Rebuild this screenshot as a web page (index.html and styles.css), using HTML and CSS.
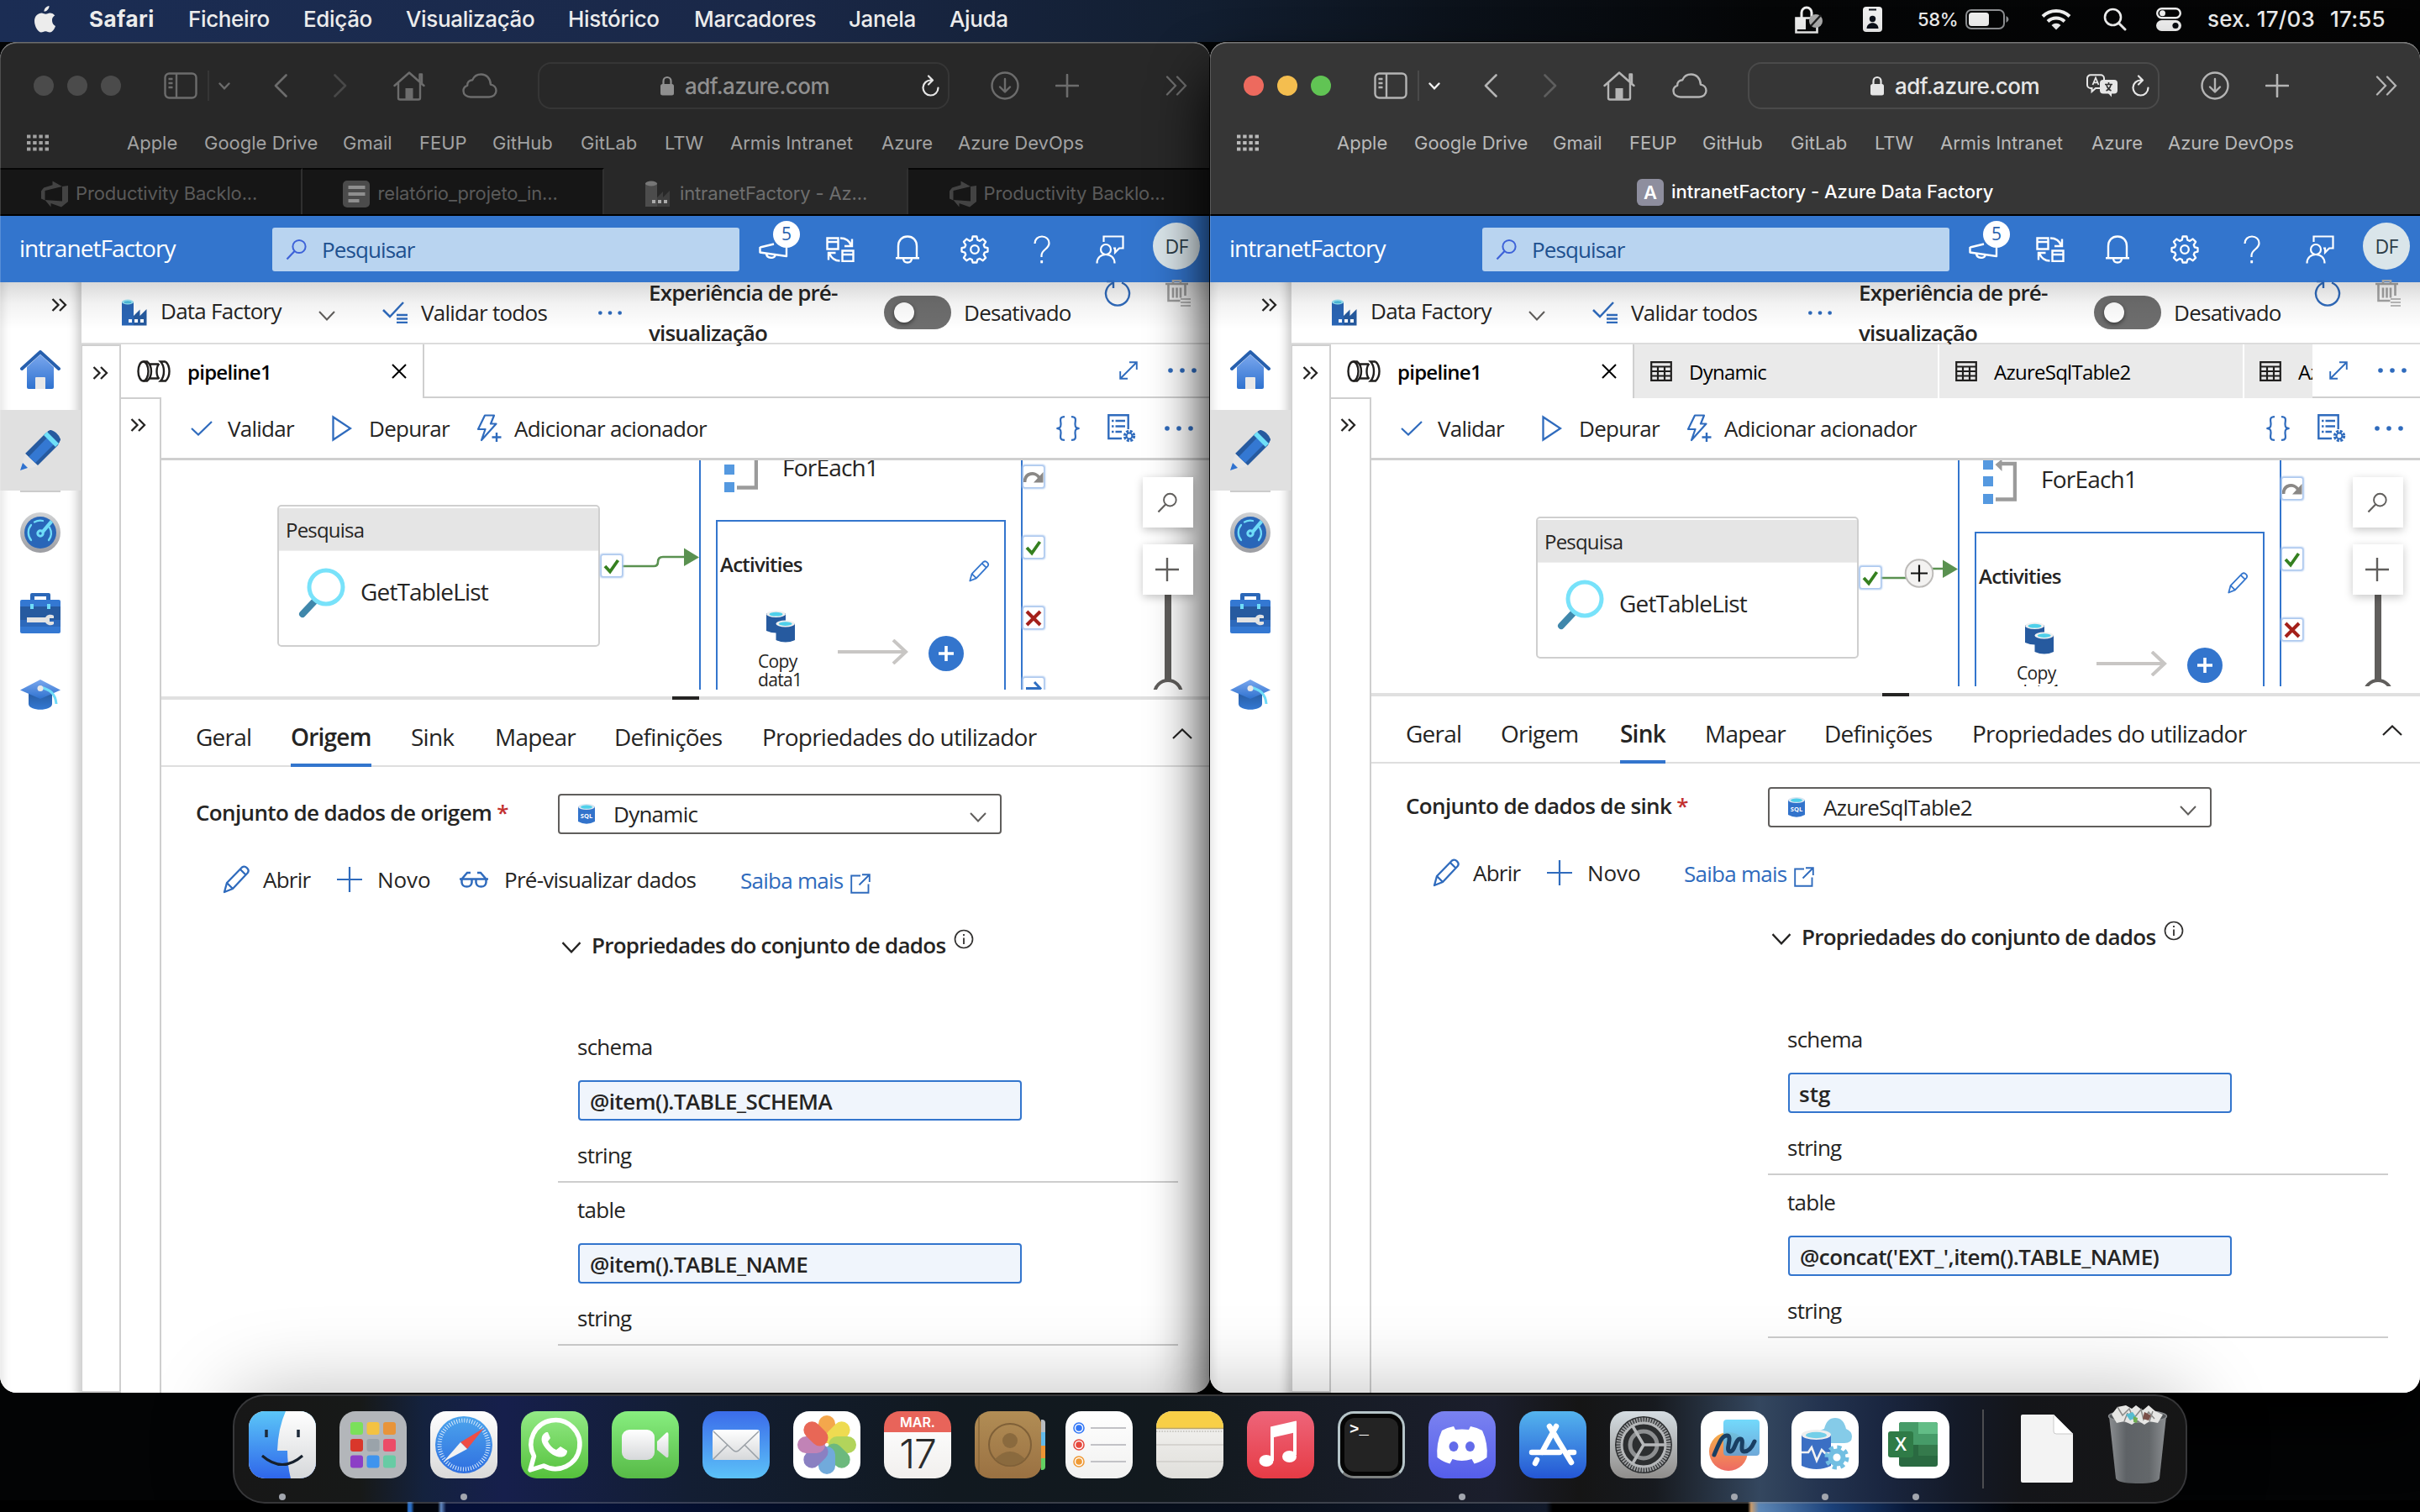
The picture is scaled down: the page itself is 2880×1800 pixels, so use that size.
FILE: index.html
```html
<!DOCTYPE html>
<html lang="pt">
<head>
<meta charset="utf-8">
<title>intranetFactory - Azure Data Factory</title>
<link rel="stylesheet" href="styles.css">
</head>
<body>
<svg class="defs" width="0" height="0" aria-hidden="true">
  <defs>
    <linearGradient id="gBlue" x1="0" y1="0" x2="0" y2="1"><stop offset="0" stop-color="#7aa7ee"/><stop offset="1" stop-color="#2f72cf"/></linearGradient>
    <linearGradient id="gDeep" x1="0" y1="0" x2="0" y2="1"><stop offset="0" stop-color="#265a9f"/><stop offset="1" stop-color="#3478d2"/></linearGradient>
    <linearGradient id="gGrey" x1="0" y1="0" x2="0" y2="1"><stop offset="0" stop-color="#d0d2d4"/><stop offset="1" stop-color="#9c9da2"/></linearGradient>
    <linearGradient id="gSafari" x1="0" y1="0" x2="0" y2="1"><stop offset="0" stop-color="#4ca4ec"/><stop offset="1" stop-color="#2f6fe0"/></linearGradient>
    <linearGradient id="gFinder" x1="0" y1="0" x2="0" y2="1"><stop offset="0" stop-color="#5bc6f8"/><stop offset="1" stop-color="#2f66ea"/></linearGradient>
    <linearGradient id="gWhite" x1="0" y1="0" x2="0" y2="1"><stop offset="0" stop-color="#fff"/><stop offset="1" stop-color="#d6d8da"/></linearGradient>
    <linearGradient id="gTrash" x1="0" y1="0" x2="1" y2="0"><stop offset="0" stop-color="#8b8e91"/><stop offset=".3" stop-color="#5e6266"/><stop offset=".7" stop-color="#63676a"/><stop offset="1" stop-color="#8b8e91"/></linearGradient>
    <linearGradient id="gOrange" x1="0" y1="0" x2="0" y2="1"><stop offset="0" stop-color="#f5b04a"/><stop offset="1" stop-color="#ee6a63"/></linearGradient>
    <linearGradient id="gSky" x1="0" y1="0" x2="0" y2="1"><stop offset="0" stop-color="#63d5fb"/><stop offset="1" stop-color="#5f9fd4"/></linearGradient>
  </defs>

  <symbol id="i-sidebar" viewBox="0 0 40 32"><g fill="none" stroke="currentColor" stroke-width="2.4"><rect x="1.5" y="1.5" width="37" height="29" rx="5"/><path d="M15 2v28M5.5 8h5M5.5 13h5M5.5 18h5"/></g></symbol>
  <symbol id="i-down" viewBox="0 0 14 9"><path d="M1.5 1.5 7 7.3l5.500-5.800" fill="none" stroke="currentColor" stroke-width="2.400" stroke-linecap="round"/></symbol>
  <symbol id="i-back" viewBox="0 0 16 28"><path d="M14.500 1.500 2 14l12.500 12.500" fill="none" stroke="currentColor" stroke-width="2.600" stroke-linecap="round" stroke-linejoin="round"/></symbol>
  <symbol id="i-fwd" viewBox="0 0 16 28"><path d="M1.500 1.500 14 14 1.500 26.500" fill="none" stroke="currentColor" stroke-width="2.600" stroke-linecap="round" stroke-linejoin="round"/></symbol>
  <symbol id="i-home" viewBox="0 0 38 36"><path d="M1.500 18 19 2.500 36.500 18M6 15v17.500a2 2 0 0 0 2 2h22a2 2 0 0 0 2-2V15M31.500 13V4.500h2.500V16" fill="none" stroke="currentColor" stroke-width="2.400" stroke-linejoin="round" stroke-linecap="round"/><path d="M14.500 21h9v13h-9z" fill="currentColor"/></symbol>
  <symbol id="i-cloud" viewBox="0 0 42 30"><path d="M10 28.500h22c5 0 8.500-3.200 8.500-7.400 0-4-2.800-7-6.600-7.500C33.700 6.500 29 1.500 22.500 1.500c-4.700 0-8.500 2.600-10.300 6.700-4 .3-6.400 3-6 6.700C3.300 15.800 1.500 18.300 1.500 21.200c0 4.200 3.600 7.300 8.500 7.300z" fill="none" stroke="currentColor" stroke-width="2.400" stroke-linejoin="round"/></symbol>
  <symbol id="i-lock" viewBox="0 0 16 24"><rect y="10" width="16" height="13.500" rx="2.500" fill="currentColor"/><path d="M3.500 11V6.500a4.500 4.500 0 0 1 9 0V11" fill="none" stroke="currentColor" stroke-width="2.200"/></symbol>
  <symbol id="i-reload" viewBox="0 0 22 27"><path d="M12 6.500a9 9 0 1 0 8.500 9M9 1.500l5 5-5 5" fill="none" stroke="currentColor" stroke-width="2.200" stroke-linecap="round" stroke-linejoin="round"/></symbol>
  <symbol id="i-translate" viewBox="0 0 38 28"><path d="M5 1.300h12a4 4 0 0 1 4 4V13a4 4 0 0 1-4 4h-6l-4.500 4V17H5a4 4 0 0 1-4-4V5.300a4 4 0 0 1 4-4z" fill="none" stroke="currentColor" stroke-width="2"/><path d="m7.500 13 3.500-8.500 3.500 8.500M8.800 10.300h4.400" fill="none" stroke="currentColor" stroke-width="1.800"/><rect x="16" y="7" width="21" height="16.500" rx="4" fill="currentColor"/><path d="M30 22v5.500L25 22z" fill="currentColor"/><path d="M22 12.500h9M26.500 10v2.500M23.500 20c3-1.500 5-4 5.500-7M24 13c.6 3 2.600 5.500 5.500 7" stroke="#333" stroke-width="1.600" fill="none"/></symbol>
  <symbol id="i-download" viewBox="0 0 34 34"><g fill="none" stroke="currentColor" stroke-width="2.400" stroke-linecap="round" stroke-linejoin="round"><circle cx="17" cy="17" r="15.500"/><path d="M17 9v15M11 18.500l6 6 6-6"/></g></symbol>
  <symbol id="i-plus" viewBox="0 0 28 28"><path d="M14 1v26M1 14h26" stroke="currentColor" stroke-width="2.600" stroke-linecap="round"/></symbol>
  <symbol id="i-more" viewBox="0 0 26 24"><path d="m2 1.500 10 10.500L2 22.500M14 1.500 24 12 14 22.500" fill="none" stroke="currentColor" stroke-width="2.300" stroke-linecap="round"/></symbol>
  <symbol id="i-grid" viewBox="0 0 26 20"><path d="M0 2.500h26M0 10h26M0 17.500h26" stroke="currentColor" stroke-width="4.200" stroke-dasharray="4.400 2.800"/></symbol>
  <symbol id="i-devops" viewBox="0 0 34 32"><path d="M33 6v19l-8 6.500-12.500-4.500v4.500L5.500 23 26 24.500V7zM26 7 14.500.5v4.800L4 8.500 1 12.500v9l4.500 2V12z" fill="currentColor"/></symbol>
  <symbol id="i-docs" viewBox="0 0 32 32"><rect width="32" height="32" rx="5" fill="#4b4b4b"/><path d="M6.500 8h20M6.500 16h20M6.500 24h13" stroke="#8f8f8f" stroke-width="4"/></symbol>
  <symbol id="i-factoryGrey" viewBox="0 0 32 32"><path d="M1 3h14v28H1z" fill="#4c4c4c"/><path d="M15 20l7-7v7l8-8v19H15z" fill="#3e3e3e"/><ellipse cx="8" cy="3.500" rx="7" ry="3" fill="#777"/><path d="M9 23h4v4H9zM16 23h4v4h-4zM23 23h4v4h-4z" fill="#aaa"/></symbol>

  <symbol id="i-search" viewBox="0 0 26 26"><circle cx="16" cy="9.500" r="7.600" fill="none" stroke="currentColor" stroke-width="2"/><path d="M10.500 15 1.500 24.500" stroke="currentColor" stroke-width="2.200"/></symbol>
  <symbol id="i-mega" viewBox="0 0 38 22"><path d="M1.500 8.500 18 4.500M1.500 8v6.500L33 19V9M9 16.500c1 5.500 9.500 5.500 10.500 1.500" fill="none" stroke="currentColor" stroke-width="2.400" stroke-linejoin="round"/></symbol>
  <symbol id="i-switch" viewBox="0 0 34 30"><g fill="none" stroke="currentColor" stroke-width="2.400"><path d="M1.500 1.500h13v13h-13zM1.500 6h13M19.500 16.500h13v12.500h-13zM19.500 21h13"/><path d="M17 1.500c6.500 0 11 3 13 9M31 2.500v8.500h-9M16.500 28.500c-6.500 0-10.500-4-12.500-9M3 27.500V19h8.500"/></g></symbol>
  <symbol id="i-bell" viewBox="0 0 30 34"><path d="M4 27V13C4 6 8.500 1.500 15 1.500S26 6 26 13v14M1 27.300h28M10 28c.5 6 9.500 6 10 0" fill="none" stroke="currentColor" stroke-width="2.400" stroke-linejoin="round"/></symbol>
  <symbol id="i-gear" viewBox="0 0 34 34"><circle cx="17" cy="17" r="4.800" fill="none" stroke="currentColor" stroke-width="2.300"/><path d="M14.600 1.500h4.800l.9 4.300 2.700 1.100 3.700-2.400 3.400 3.400-2.400 3.700 1.100 2.700 3.700.9v4.400l-3.700.9-1.100 2.700 2.400 3.700-3.400 3.400-3.700-2.400-2.700 1.100-.9 3.500h-4.800l-.9-3.500-2.700-1.100-3.700 2.400-3.400-3.400 2.400-3.700-1.100-2.700-3.700-.9v-4.400l3.700-.9 1.100-2.700-2.400-3.700 3.400-3.400 3.700 2.400 2.700-1.100z" fill="none" stroke="currentColor" stroke-width="2.300" stroke-linejoin="round"/></symbol>
  <symbol id="i-help" viewBox="0 0 22 34"><path d="M2.500 10c0-5 3.500-8.500 8.500-8.500s8.500 3.300 8.500 8c0 7-9 7.500-9 14.500v2" fill="none" stroke="currentColor" stroke-width="2.200"/><path d="M9.300 30h2.800v3.300H9.300z" fill="currentColor"/></symbol>
  <symbol id="i-feedback" viewBox="0 0 34 34"><g fill="none" stroke="currentColor" stroke-width="2.200"><circle cx="12" cy="17" r="6"/><path d="M1.500 33.500c0-6.500 4.500-10.500 10.500-10.500s10.500 4 10.500 10.500M9.500 8V1.500h23v14H28l-5 5v-5h-2"/></g></symbol>

  <symbol id="i-dbl" viewBox="0 0 19 16"><path d="m1.500 1 7 7-7 7M10 1l7 7-7 7" fill="none" stroke="currentColor" stroke-width="2.300"/></symbol>
  <symbol id="i-azHome" viewBox="0 0 48 46"><path d="M8 20 24 5l16 15v24a2 2 0 0 1-2 2H10a2 2 0 0 1-2-2z" fill="url(#gBlue)"/><path d="M2 22 24 2l22 20" fill="none" stroke="#265fae" stroke-width="4" stroke-linejoin="round" stroke-linecap="round"/><path d="M18 46V33a1 1 0 0 1 1-1h10a1 1 0 0 1 1 1v13z" fill="#e8e8e8"/></symbol>
  <symbol id="i-azPencil" viewBox="0 0 48 48"><path d="m6 28 24-24 6-4q3 0 7 3.500T48 11l-3 7-24 24z" fill="#265a9f"/><path d="m10 32 25-26 8 8-25 25z" fill="#3478d2"/><path d="m28 6 4-4 14 14-4 4z" fill="#6fe0f8"/><path d="m36 0 12 11-1.500 4L32.500 1.500z" fill="#265a9f"/><path d="M6 28 21 43 0 48z" fill="#e5e5e5"/><path d="m3 39 6 6-9 3z" fill="#2f72cf"/></symbol>
  <symbol id="i-azGauge" viewBox="0 0 48 48"><circle cx="24" cy="24" r="24" fill="url(#gGrey)"/><circle cx="24" cy="24" r="19" fill="#2966b8"/><g fill="none" stroke="#6fdcf8" stroke-width="2.300" stroke-linecap="round"><path d="M13 33a14 14 0 0 1 0-18M17 11.500a14 14 0 0 1 10-1.500M35 18a14 14 0 0 1-1 15"/><circle cx="24" cy="25" r="3.200" stroke-width="3"/></g><path d="m25 22 11-13 3 3-11 13z" fill="#6fdcf8"/></symbol>
  <symbol id="i-azTools" viewBox="0 0 48 48"><path d="M12 9V2q0-2 2-2h20q2 0 2 2v7h-5V4H17v5z" fill="#2a67b8"/><rect y="8" width="48" height="40" rx="2" fill="#3478d2"/><path d="M0 16h48v16H0z" fill="#265a9f"/><path d="M0 32h48v8H0z" fill="#2d69bb"/><path d="M12 13h4v6h-4zM32 13h4v6h-4z" fill="#6fdcf8"/><path d="M8 29h22a7 7 0 0 1 10-2v3h-5v4h5v3a7 7 0 0 1-10-2H8z" fill="#e2e2e2"/></symbol>
  <symbol id="i-azCap" viewBox="0 0 48 36"><path d="M10 14h28v15c0 9-28 9-28 0z" fill="url(#gDeep)"/><path d="M24 0 48 12.500 24 23 0 12.500z" fill="url(#gBlue)"/><path d="M24 9c12 3 18 8 19 20" fill="none" stroke="#6fdcf8" stroke-width="3"/><circle cx="24" cy="10.500" r="3.500" fill="#e8e8e8"/></symbol>
  <symbol id="i-factory" viewBox="0 0 32 32"><path d="M1 3h14v28.500H1z" fill="#2a66b6"/><path d="M15 20l7.500-7.500V20l8-8v19.500H15z" fill="#265a9f"/><ellipse cx="8" cy="3.500" rx="7" ry="3" fill="#9fe8f8"/><ellipse cx="8" cy="3.700" rx="4.500" ry="1.500" fill="#4bbfe0"/><path d="M9 24h4v4H9zM16 24h4v4h-4zM23 24h4v4h-4z" fill="#fff"/></symbol>
  <symbol id="i-chev" viewBox="0 0 20 12"><path d="m1 1 9 9.500L19 1" fill="none" stroke="currentColor" stroke-width="2"/></symbol>
  <symbol id="i-chevUp" viewBox="0 0 24 13"><path d="m1 12 11-10.500L23 12" fill="none" stroke="currentColor" stroke-width="2.200"/></symbol>
  <symbol id="i-validAll" viewBox="0 0 30 26"><path d="m1 10 8 8L25 1" fill="none" stroke="currentColor" stroke-width="2.500"/><path d="M17 16h13M17 20.500h13M17 25h13" stroke="currentColor" stroke-width="2.400"/></symbol>
  <symbol id="i-dots" viewBox="0 0 36 8"><circle cx="4" cy="4" r="2.800" fill="currentColor"/><circle cx="18" cy="4" r="2.800" fill="currentColor"/><circle cx="32" cy="4" r="2.800" fill="currentColor"/></symbol>
  <symbol id="i-refresh" viewBox="0 0 32 32"><path d="M11 3.500A14 14 0 1 0 21 3.500M11 10V2H3" fill="none" stroke="currentColor" stroke-width="2.400"/></symbol>
  <symbol id="i-trash" viewBox="0 0 30 32"><path d="M0 5h27M9 5V1h9v4M3.500 5v20h14M23.500 5v14M9 9.500v12M13.500 9.500v12M18 9.500v12" fill="none" stroke="currentColor" stroke-width="2.600"/><path d="M18 23h12M18 27h12M18 31h12" stroke="currentColor" stroke-width="1.500"/></symbol>
  <symbol id="i-pipeline" viewBox="0 0 40 26"><g fill="none" stroke="#201f1e" stroke-width="2.400"><ellipse cx="7.500" cy="13" rx="6" ry="11.500"/><path d="M7.500 1.500H12q5 4 5 11.500t-5 11.500H7.500M15.500 4.500H26M15.500 21.500H26M34 1.500h-6q4 4 4 11.500t-4 11.500h6q4.500-4 4.500-11.500T34 1.500M26.500 4q-3 3-3 9t3 9"/></g></symbol>
  <symbol id="i-close" viewBox="0 0 18 18"><path d="m1 1 16 16M17 1 1 17" stroke="currentColor" stroke-width="2"/></symbol>
  <symbol id="i-expand" viewBox="0 0 22 22"><path d="M1.500 20.500 20.500 1.500M12 1.200h8.800V10M10 20.800H1.200V12" fill="none" stroke="currentColor" stroke-width="1.900"/></symbol>
  <symbol id="i-table" viewBox="0 0 26 24"><path d="M1.200 1.200h23.600v21.600H1.200zM1 6.500h24M1 12h24M1 17.500h24M9 6.500V23M17 6.500V23" fill="none" stroke="#201f1e" stroke-width="2.200"/></symbol>
  <symbol id="i-check" viewBox="0 0 26 18"><path d="m1 9 8 7.500L25 1" fill="none" stroke="currentColor" stroke-width="2.200"/></symbol>
  <symbol id="i-play" viewBox="0 0 24 32"><path d="M1.500 2.500v27L22 16z" fill="none" stroke="currentColor" stroke-width="2.300"/></symbol>
  <symbol id="i-bolt" viewBox="0 0 30 34"><path d="M10 1.500h11l-4 10h6.500L6 31l4.500-13H2z" fill="none" stroke="currentColor" stroke-width="2.200" stroke-linejoin="round"/><path d="M24 22v11M18.500 27.500h11" stroke="currentColor" stroke-width="2.400"/></symbol>
  <symbol id="i-braces" viewBox="0 0 30 30"><path d="M11 1.200C4 1.200 6.500 6 6.500 10S5 14.500 1.500 15C5 15.500 6.500 16 6.500 20S4 28.800 11 28.800M19 1.200c7 0 4.500 4.800 4.500 8.800s1.500 4.500 5 5c-3.500.5-5 1-5 5s2.500 8.800-4.500 8.800" fill="none" stroke="currentColor" stroke-width="2.200"/></symbol>
  <symbol id="i-list" viewBox="0 0 34 34"><path d="M17 29H1.300V1.300h23.400V18" fill="none" stroke="currentColor" stroke-width="2.400"/><path d="M5 8h2.500M9.500 8H21M5 14.500h2.500M9.500 14.500H21M5 21h2.500M9.500 21H17" stroke="currentColor" stroke-width="2.400"/><circle cx="26" cy="26" r="5.600" fill="none" stroke="currentColor" stroke-width="3.200" stroke-dasharray="2.900 1.500"/><circle cx="26" cy="26" r="3.400" fill="none" stroke="currentColor" stroke-width="2"/></symbol>
  <symbol id="i-lens" viewBox="0 0 56 60"><path d="m5 55 16-17" stroke="#3f87ab" stroke-width="8" stroke-linecap="round"/><circle cx="33" cy="23" r="20" fill="#fff" stroke="#78e2fa" stroke-width="5"/></symbol>
  <symbol id="i-foreach" viewBox="0 0 40 54"><path d="M0 0h12v13H0zM0 21h12v12H0zM0 42h12v12H0z" fill="#5599e0"/><path d="M20 6h18v42.500H15" fill="none" stroke="#9b9b9b" stroke-width="4.500"/><path d="m14.500 7 8-6.500V15z" fill="#9b9b9b"/></symbol>
  <symbol id="i-copy" viewBox="0 0 34 38"><path d="M0 3h23v21q-11 5-23 0z" fill="#265a9f"/><ellipse cx="11.500" cy="4" rx="11.500" ry="4" fill="#f0f0f0"/><ellipse cx="11.500" cy="4.200" rx="8" ry="2.400" fill="#4fd0ea"/><path d="M11.500 15H34v20q-11 5-22.500 0z" fill="#265a9f"/><ellipse cx="22.700" cy="15.500" rx="11.300" ry="4" fill="#f0f0f0"/><ellipse cx="22.700" cy="15.600" rx="8" ry="2.300" fill="#4fd0ea"/></symbol>
  <symbol id="i-pen" viewBox="0 0 32 34"><path d="m2 32 3-11L23 2.500q3-2 6 .8t.6 6L12 28zM5 21l7 7M21 5l7 7" fill="none" stroke="currentColor" stroke-width="2.300" stroke-linejoin="round"/></symbol>
  <symbol id="i-glasses" viewBox="0 0 34 20"><g fill="none" stroke="currentColor" stroke-width="2.500"><path d="M2.500 9.500h12v4q-.5 5-6 5t-6-5zM19.500 9.500h12v4q-.5 5-6 5t-6-5zM0 9.500h34M2.500 9.500 9 2h4M31.500 9.500 25 2h-4"/></g></symbol>
  <symbol id="i-ext" viewBox="0 0 24 24"><path d="M12 2.500H1.200v20.300H21.500V12.500M10.500 13.500 22 2M14 1.200h8.800V10" fill="none" stroke="currentColor" stroke-width="1.900"/></symbol>
  <symbol id="i-sql" viewBox="0 0 20 24"><path d="M0 3h20v18q-10 5.500-20 0z" fill="#3273cb"/><ellipse cx="10" cy="3.500" rx="10" ry="3.500" fill="#d8e6f2"/><ellipse cx="10" cy="3.700" rx="7" ry="2.100" fill="#4fd0ea"/><text x="10" y="17" font-family="Open Sans, sans-serif" font-weight="700" font-size="7.500" letter-spacing="0" text-anchor="middle" fill="#fff">SQL</text></symbol>
  <symbol id="i-info" viewBox="0 0 24 24"><circle cx="12" cy="12" r="10.500" fill="none" stroke="#323130" stroke-width="1.700"/><path d="M12 10.500V18M12 6v2" stroke="#323130" stroke-width="1.800"/></symbol>
  <symbol id="i-redo" viewBox="0 0 24 25"><path d="M1.500 19C1.500 8 14 5.500 19 14" fill="none" stroke="#8a8886" stroke-width="3.800"/><path d="M23.500 7v12.500H12z" fill="#8a8886"/></symbol>
  <symbol id="i-ok" viewBox="0 0 24 25"><path d="m4 13 6 6.500L19.500 6" fill="none" stroke="#35801f" stroke-width="3.800"/></symbol>
  <symbol id="i-fail" viewBox="0 0 24 25"><path d="m4 5 16 16M20 5 4 21" stroke="#a4201a" stroke-width="4"/></symbol>
  <symbol id="i-next" viewBox="0 0 24 25"><path d="M3 12.500h16M13 5l7 7.500-7 7.500" fill="none" stroke="#2f6fc2" stroke-width="3"/></symbol>
</svg>

<header class="menubar">
  <svg width="27" height="32" viewBox="0 0 27 32"><path d="M18.500 0c.3 3.200-2.700 6.700-6 6.800C12.200 3.600 15.200.3 18.500 0zM22 17c0-3.500 2.500-5 3.300-5.500C23.500 8.900 21 8.500 19.800 8.400c-2.300-.2-4 1.300-5.300 1.300S11.300 8.400 9.500 8.400C5.500 8.500 1 11.700 1 18c0 6.500 4.500 13.500 8 13.500 1.900 0 2.900-1.300 5.200-1.300s3.200 1.300 5.100 1.300c3.300 0 6-5 6.700-7.500-.4-.2-4-1.800-4-7z" fill="#ececec"/></svg>
  <b>Safari</b><span>Ficheiro</span><span>Edição</span><span>Visualização</span><span>Histórico</span><span>Marcadores</span><span>Janela</span><span>Ajuda</span>
  <svg width="34" height="34" viewBox="0 0 34 34"><path d="M8 16V9a6 6 0 0 1 12 0v7" fill="none" stroke="#eee" stroke-width="3"/><path d="M1.500 15.500h25v17h-25z" fill="none" stroke="#eee" stroke-width="2.600"/><path d="M1 16h12v13H1z" fill="#eee"/><circle cx="25" cy="19" r="8" fill="#a9a9a9"/><path d="m19 25 12-13" stroke="#222" stroke-width="2.500"/></svg>
  <svg width="23" height="30" viewBox="0 0 23 30"><rect width="23" height="30" rx="4" fill="#eee"/><path d="M7 3.500h9" stroke="#0b1019" stroke-width="2"/><circle cx="11.500" cy="14.500" r="3.700" fill="#0b1019"/><path d="M4.500 26c0-9 14-9 14 0z" fill="#0b1019"/></svg>
  <span class="pct">58%</span>
  <svg width="52" height="24" viewBox="0 0 52 24"><rect x="1" y="1" width="45" height="22" rx="6" fill="none" stroke="#8d8f92" stroke-width="2"/><rect x="4" y="4" width="24" height="16" rx="3.500" fill="#eee"/><path d="M48.500 8v8q3-1.500 3-4t-3-4z" fill="#8d8f92"/></svg>
  <svg width="36" height="26" viewBox="0 0 36 26"><g fill="none" stroke="#eee" stroke-width="4"><path d="M2 9.500a23 23 0 0 1 32 0M8 15.500a14.500 14.500 0 0 1 20 0"/></g><path d="M18 25.500 12.500 20a8 8 0 0 1 11 0z" fill="#eee"/></svg>
  <svg width="28" height="28" viewBox="0 0 28 28"><circle cx="11.500" cy="11.500" r="9.500" fill="none" stroke="#eee" stroke-width="2.600"/><path d="m18.500 18.500 7.500 7.500" stroke="#eee" stroke-width="3" stroke-linecap="round"/></svg>
  <svg width="30" height="28" viewBox="0 0 30 28"><rect x="1.200" y="1.200" width="27.600" height="11" rx="5.500" fill="none" stroke="#eee" stroke-width="2.400"/><circle cx="7.500" cy="6.700" r="3.500" fill="#eee"/><rect y="15" width="30" height="13" rx="6.500" fill="#eee"/><circle cx="23" cy="21.500" r="3.600" fill="#070a0f"/></svg>
  <span class="clock">sex. 17/03</span><span class="clock">17:55</span>
</header>

<section class="window inactive">
  <div class="nav">
    <div class="lights"><i></i><i></i><i></i></div>
    <svg width="40" height="32"><use href="#i-sidebar"/></svg><i class="sep"></i>
    <svg width="14" height="9"><use href="#i-down"/></svg>
    <svg width="16" height="28"><use href="#i-back"/></svg>
    <svg class="dim" width="16" height="28"><use href="#i-fwd"/></svg>
    <svg width="38" height="36"><use href="#i-home"/></svg>
    <svg width="42" height="30"><use href="#i-cloud"/></svg>
    <div class="address"><svg width="16" height="24"><use href="#i-lock"/></svg><span>adf.azure.com</span><i></i><svg class="bright" width="22" height="27"><use href="#i-reload"/></svg></div>
    <svg width="34" height="34"><use href="#i-download"/></svg>
    <svg width="28" height="28"><use href="#i-plus"/></svg>
    <svg width="26" height="24"><use href="#i-more"/></svg>
  </div>
  <div class="bookmarks"><svg width="26" height="20"><use href="#i-grid"/></svg><span>Apple</span><span>Google Drive</span><span>Gmail</span><span>FEUP</span><span>GitHub</span><span>GitLab</span><span>LTW</span><span>Armis Intranet</span><span>Azure</span><span>Azure DevOps</span></div>
  <div class="tabbar">
    <div class="btab"><svg width="34" height="32"><use href="#i-devops"/></svg><span>Productivity Backlo...</span></div>
    <div class="btab"><svg width="32" height="32"><use href="#i-docs"/></svg><span>relatório_projeto_in...</span></div>
    <div class="btab current"><svg width="32" height="32"><use href="#i-factoryGrey"/></svg><span>intranetFactory - Az...</span></div>
    <div class="btab"><svg width="34" height="32"><use href="#i-devops"/></svg><span>Productivity Backlo...</span></div>
  </div>
  <div class="azhead">
    <span class="brand">intranetFactory</span>
    <div class="search"><svg width="26" height="26"><use href="#i-search"/></svg><span>Pesquisar</span></div>
    <div class="mega"><svg width="38" height="22"><use href="#i-mega"/></svg><em>5</em></div>
    <svg width="34" height="30"><use href="#i-switch"/></svg>
    <svg width="30" height="34"><use href="#i-bell"/></svg>
    <svg width="34" height="34"><use href="#i-gear"/></svg>
    <svg width="22" height="34"><use href="#i-help"/></svg>
    <svg width="34" height="34"><use href="#i-feedback"/></svg>
    <span class="avatar">DF</span>
  </div>
  <div class="page">
    <nav class="rail">
      <svg class="dbl" width="19" height="16"><use href="#i-dbl"/></svg>
      <a><svg width="48" height="46"><use href="#i-azHome"/></svg></a>
      <a class="on"><svg width="48" height="48"><use href="#i-azPencil"/></svg></a>
      <a><svg width="48" height="48"><use href="#i-azGauge"/></svg></a>
      <a><svg width="48" height="48"><use href="#i-azTools"/></svg></a>
      <a><svg width="48" height="36"><use href="#i-azCap"/></svg></a>
    </nav>
    <main class="main">
      <div class="bar1">
        <svg width="32" height="32"><use href="#i-factory"/></svg><span class="up">Data Factory</span>
        <svg class="grey low" width="20" height="12"><use href="#i-chev"/></svg>
        <svg width="30" height="26"><use href="#i-validAll"/></svg><span>Validar todos</span>
        <svg class="small" width="30" height="7"><use href="#i-dots"/></svg>
        <b>Experiência de pré-<br>visualização</b>
        <i class="toggle"></i><span>Desativado</span>
        <svg class="top" width="32" height="32"><use href="#i-refresh"/></svg>
        <svg class="top disabled" width="30" height="32"><use href="#i-trash"/></svg>
      </div>
      <div class="split">
        <aside class="fold"><svg width="19" height="16"><use href="#i-dbl"/></svg></aside>
        <div class="stack">
          <div class="tabs">
            <div class="tab open"><svg width="40" height="26"><use href="#i-pipeline"/></svg><b>pipeline1</b><svg width="18" height="18"><use href="#i-close"/></svg></div>
            <div class="tabacts wide"><svg width="22" height="22"><use href="#i-expand"/></svg><svg width="36" height="8"><use href="#i-dots"/></svg></div>
          </div>
          <div class="split">
            <aside class="fold second"><svg width="19" height="16"><use href="#i-dbl"/></svg></aside>
            <div class="stack">
              <div class="bar2">
                <svg width="26" height="18"><use href="#i-check"/></svg><span>Validar</span>
                <svg width="24" height="32"><use href="#i-play"/></svg><span>Depurar</span>
                <svg width="30" height="34"><use href="#i-bolt"/></svg><span>Adicionar acionador</span>
                <svg width="30" height="30"><use href="#i-braces"/></svg>
                <svg width="34" height="34"><use href="#i-list"/></svg>
                <svg width="36" height="8"><use href="#i-dots"/></svg>
              </div>
              <div class="canvas">
                <div class="graph">
                  <svg class="wires" width="1248" height="273" viewBox="0 0 1248 273"><path d="M546 126h40q5 0 5-5v-0q0-6 6-6h26" fill="none" stroke="#5a9150" stroke-width="2.600"/><path d="M622 104.500v21.500l18-10.500z" fill="#5a9150"/></svg>
                  <div class="node"><div class="kind">Pesquisa</div><div class="name"><svg width="56" height="60"><use href="#i-lens"/></svg><span>GetTableList</span></div></div>
                  <svg class="port out" width="24" height="25"><use href="#i-ok"/></svg>
                  <div class="foreach">
                    <div class="fhead"><svg width="40" height="54"><use href="#i-foreach"/></svg><span>ForEach1</span></div>
                    <div class="inner">
                      <div class="ihead"><b>Activities</b><svg width="26" height="26"><use href="#i-pen"/></svg></div>
                      <div class="irow"><div class="act"><svg width="34" height="38"><use href="#i-copy"/></svg><span>Copy data1</span></div>
                        <svg class="arrow" width="84" height="30" viewBox="0 0 84 30"><path d="M0 15h80M66 1l15 14-15 14" fill="none" stroke="#c8c6c4" stroke-width="4"/></svg><i class="add"><svg width="18" height="18" viewBox="0 0 18 18"><path d="M9 0v18M0 9h18" stroke="#fff" stroke-width="3.600"/></svg></i></div>
                    </div>
                  </div>
                  <div class="ports"><svg class="port" width="24" height="25"><use href="#i-redo"/></svg><svg class="port" width="24" height="25"><use href="#i-ok"/></svg><svg class="port" width="24" height="25"><use href="#i-fail"/></svg><svg class="port" width="24" height="25"><use href="#i-next"/></svg></div>
                </div>
                <div class="zoom"><i><svg width="25" height="25"><use href="#i-search"/></svg></i><i><svg width="28" height="28" viewBox="0 0 28 28"><path d="M14 0v28M0 14h28" stroke="#605e5c" stroke-width="2.400"/></svg></i><div class="track"></div><div class="knob"></div></div>
              </div>
              <div class="splitter"><i></i></div>
              <div class="ptabs"><span>Geral</span><span class="sel">Origem</span><span>Sink</span><span>Mapear</span><span>Definições</span><span>Propriedades do utilizador</span><svg width="24" height="13"><use href="#i-chevUp"/></svg></div>
              <div class="form">
                <div class="frow dataset"><b>Conjunto de dados de origem <em>*</em></b><div class="select"><svg width="20" height="24"><use href="#i-sql"/></svg><span>Dynamic</span><svg width="20" height="12"><use href="#i-chev"/></svg></div></div>
                <div class="frow cmds"><svg width="32" height="34"><use href="#i-pen"/></svg><span>Abrir</span><svg width="30" height="30" viewBox="0 0 30 30"><path d="M15 0v30M0 15h30" stroke="currentColor" stroke-width="2.200"/></svg><span class="nv">Novo</span><svg width="34" height="20"><use href="#i-glasses"/></svg><span>Pré-visualizar dados</span><a>Saiba mais</a><svg class="ext" width="24" height="24"><use href="#i-ext"/></svg></div>
                <div class="frow sect"><svg width="26" height="14"><use href="#i-chev"/></svg><b>Propriedades do conjunto de dados</b><svg class="info" width="24" height="24"><use href="#i-info"/></svg></div>
                <div class="fields">
                  <div class="field"><label>schema</label><div class="input">@item().TABLE_SCHEMA</div><span>string</span></div>
                  <div class="field"><label>table</label><div class="input">@item().TABLE_NAME</div><span>string</span></div>
                </div>
              </div>
            </div>
          </div>
        </div>
      </div>
    </main>
  </div>
</section>

<section class="window active">
  <div class="nav">
    <div class="lights"><i></i><i></i><i></i></div>
    <svg width="40" height="32"><use href="#i-sidebar"/></svg><i class="sep"></i>
    <svg class="bright" width="14" height="9"><use href="#i-down"/></svg>
    <svg width="16" height="28"><use href="#i-back"/></svg>
    <svg class="dim" width="16" height="28"><use href="#i-fwd"/></svg>
    <svg width="38" height="36"><use href="#i-home"/></svg>
    <svg width="42" height="30"><use href="#i-cloud"/></svg>
    <div class="address"><svg width="16" height="24"><use href="#i-lock"/></svg><span>adf.azure.com</span><svg width="38" height="28"><use href="#i-translate"/></svg><svg width="22" height="27"><use href="#i-reload"/></svg></div>
    <svg width="34" height="34"><use href="#i-download"/></svg>
    <svg width="28" height="28"><use href="#i-plus"/></svg>
    <svg width="26" height="24"><use href="#i-more"/></svg>
  </div>
  <div class="bookmarks"><svg width="26" height="20"><use href="#i-grid"/></svg><span>Apple</span><span>Google Drive</span><span>Gmail</span><span>FEUP</span><span>GitHub</span><span>GitLab</span><span>LTW</span><span>Armis Intranet</span><span>Azure</span><span>Azure DevOps</span></div>
  <div class="tabbar single"><i class="fav">A</i><span>intranetFactory - Azure Data Factory</span></div>
  <div class="azhead">
    <span class="brand">intranetFactory</span>
    <div class="search"><svg width="26" height="26"><use href="#i-search"/></svg><span>Pesquisar</span></div>
    <div class="mega"><svg width="38" height="22"><use href="#i-mega"/></svg><em>5</em></div>
    <svg width="34" height="30"><use href="#i-switch"/></svg>
    <svg width="30" height="34"><use href="#i-bell"/></svg>
    <svg width="34" height="34"><use href="#i-gear"/></svg>
    <svg width="22" height="34"><use href="#i-help"/></svg>
    <svg width="34" height="34"><use href="#i-feedback"/></svg>
    <span class="avatar">DF</span>
  </div>
  <div class="page">
    <nav class="rail">
      <svg class="dbl" width="19" height="16"><use href="#i-dbl"/></svg>
      <a><svg width="48" height="46"><use href="#i-azHome"/></svg></a>
      <a class="on"><svg width="48" height="48"><use href="#i-azPencil"/></svg></a>
      <a><svg width="48" height="48"><use href="#i-azGauge"/></svg></a>
      <a><svg width="48" height="48"><use href="#i-azTools"/></svg></a>
      <a><svg width="48" height="36"><use href="#i-azCap"/></svg></a>
    </nav>
    <main class="main">
      <div class="bar1">
        <svg width="32" height="32"><use href="#i-factory"/></svg><span class="up">Data Factory</span>
        <svg class="grey low" width="20" height="12"><use href="#i-chev"/></svg>
        <svg width="30" height="26"><use href="#i-validAll"/></svg><span>Validar todos</span>
        <svg class="small" width="30" height="7"><use href="#i-dots"/></svg>
        <b>Experiência de pré-<br>visualização</b>
        <i class="toggle"></i><span>Desativado</span>
        <svg class="top" width="32" height="32"><use href="#i-refresh"/></svg>
        <svg class="top disabled" width="30" height="32"><use href="#i-trash"/></svg>
      </div>
      <div class="split">
        <aside class="fold"><svg width="19" height="16"><use href="#i-dbl"/></svg></aside>
        <div class="stack">
          <div class="tabs">
            <div class="tab open"><svg width="40" height="26"><use href="#i-pipeline"/></svg><b>pipeline1</b><svg width="18" height="18"><use href="#i-close"/></svg></div>
            <div class="tab"><svg width="26" height="24"><use href="#i-table"/></svg><span>Dynamic</span></div>
            <div class="tab"><svg width="26" height="24"><use href="#i-table"/></svg><span>AzureSqlTable2</span></div>
            <div class="tab cut"><svg width="26" height="24"><use href="#i-table"/></svg><span>Az</span></div>
            <div class="tabacts"><svg width="22" height="22"><use href="#i-expand"/></svg><svg width="36" height="8"><use href="#i-dots"/></svg></div>
          </div>
          <div class="split">
            <aside class="fold second"><svg width="19" height="16"><use href="#i-dbl"/></svg></aside>
            <div class="stack">
              <div class="bar2">
                <svg width="26" height="18"><use href="#i-check"/></svg><span>Validar</span>
                <svg width="24" height="32"><use href="#i-play"/></svg><span>Depurar</span>
                <svg width="30" height="34"><use href="#i-bolt"/></svg><span>Adicionar acionador</span>
                <svg width="30" height="30"><use href="#i-braces"/></svg>
                <svg width="34" height="34"><use href="#i-list"/></svg>
                <svg width="36" height="8"><use href="#i-dots"/></svg>
              </div>
              <div class="canvas short">
                <div class="graph shifted">
                  <svg class="wires" width="1248" height="273" viewBox="0 0 1248 273"><path d="M546 126h40q5 0 5-5v-0q0-6 6-6h26" fill="none" stroke="#5a9150" stroke-width="2.600"/><path d="M622 104.500v21.500l18-10.500z" fill="#5a9150"/><circle cx="594" cy="120.500" r="16.300" fill="#f3f2f1" stroke="#bdbbb9" stroke-width="2"/><path d="M594 110.500v20M584 120.500h20" stroke="#111" stroke-width="2.200"/></svg>
                  <div class="node"><div class="kind">Pesquisa</div><div class="name"><svg width="56" height="60"><use href="#i-lens"/></svg><span>GetTableList</span></div></div>
                  <svg class="port out" width="24" height="25"><use href="#i-ok"/></svg>
                  <div class="foreach">
                    <div class="fhead"><svg width="40" height="54"><use href="#i-foreach"/></svg><span>ForEach1</span></div>
                    <div class="inner">
                      <div class="ihead"><b>Activities</b><svg width="26" height="26"><use href="#i-pen"/></svg></div>
                      <div class="irow"><div class="act"><svg width="34" height="38"><use href="#i-copy"/></svg><span>Copy data1</span></div>
                        <svg class="arrow" width="84" height="30" viewBox="0 0 84 30"><path d="M0 15h80M66 1l15 14-15 14" fill="none" stroke="#c8c6c4" stroke-width="4"/></svg><i class="add"><svg width="18" height="18" viewBox="0 0 18 18"><path d="M9 0v18M0 9h18" stroke="#fff" stroke-width="3.600"/></svg></i></div>
                    </div>
                  </div>
                  <div class="ports"><svg class="port" width="24" height="25"><use href="#i-redo"/></svg><svg class="port" width="24" height="25"><use href="#i-ok"/></svg><svg class="port" width="24" height="25"><use href="#i-fail"/></svg></div>
                </div>
                <div class="zoom"><i><svg width="25" height="25"><use href="#i-search"/></svg></i><i><svg width="28" height="28" viewBox="0 0 28 28"><path d="M14 0v28M0 14h28" stroke="#605e5c" stroke-width="2.400"/></svg></i><div class="track"></div><div class="knob"></div></div>
              </div>
              <div class="splitter"><i></i></div>
              <div class="ptabs"><span>Geral</span><span>Origem</span><span class="sel sink">Sink</span><span>Mapear</span><span>Definições</span><span>Propriedades do utilizador</span><svg width="24" height="13"><use href="#i-chevUp"/></svg></div>
              <div class="form tight">
                <div class="frow dataset"><b>Conjunto de dados de sink <em>*</em></b><div class="select"><svg width="20" height="24"><use href="#i-sql"/></svg><span>AzureSqlTable2</span><svg width="20" height="12"><use href="#i-chev"/></svg></div></div>
                <div class="frow cmds sinkcmds"><svg width="32" height="34"><use href="#i-pen"/></svg><span>Abrir</span><svg width="30" height="30" viewBox="0 0 30 30"><path d="M15 0v30M0 15h30" stroke="currentColor" stroke-width="2.200"/></svg><span class="nv">Novo</span><a>Saiba mais</a><svg class="ext" width="24" height="24"><use href="#i-ext"/></svg></div>
                <div class="frow sect"><svg width="26" height="14"><use href="#i-chev"/></svg><b>Propriedades do conjunto de dados</b><svg class="info" width="24" height="24"><use href="#i-info"/></svg></div>
                <div class="fields">
                  <div class="field"><label>schema</label><div class="input plain">stg</div><span>string</span></div>
                  <div class="field"><label>table</label><div class="input">@concat('EXT_',item().TABLE_NAME)</div><span>string</span></div>
                </div>
              </div>
            </div>
          </div>
        </div>
      </div>
    </main>
  </div>
</section>

<footer class="dock">
  <div class="app run finder"><svg viewBox="0 0 80 80"><path d="M0 0h80v80H0z" fill="url(#gFinder)"/><path d="M44 0h36v80H50q-4-16-4-33H34Q35 20 44 0z" fill="url(#gWhite)"/><path d="M21 22v9M59 22v9" stroke="#1d2a3a" stroke-width="3.500"/><path d="M16 53q24 21 48 0" fill="none" stroke="#16202c" stroke-width="3"/></svg></div>
  <div class="app launch"><svg viewBox="0 0 80 80"><g><rect x="13" y="13" width="15" height="15" rx="3" fill="#7be05a"/><rect x="32.500" y="13" width="15" height="15" rx="3" fill="#f3c242"/><rect x="52" y="13" width="15" height="15" rx="3" fill="#e8943a"/><rect x="13" y="33" width="15" height="15" rx="3" fill="#d9372b"/><rect x="32.500" y="33" width="15" height="15" rx="3" fill="#9aa3aa"/><rect x="52" y="33" width="15" height="15" rx="3" fill="#ec4c68"/><rect x="13" y="52.500" width="15" height="15" rx="3" fill="#8c3fc6"/><rect x="32.500" y="52.500" width="15" height="15" rx="3" fill="#3f94ee"/><rect x="52" y="52.500" width="15" height="15" rx="3" fill="#67cba4"/></g></svg></div>
  <div class="app run safari"><svg viewBox="0 0 80 80"><circle cx="40" cy="40" r="34" fill="url(#gSafari)"/><circle cx="40" cy="40" r="29" fill="none" stroke="#dcecfb" stroke-width="5" stroke-dasharray="1 2.040"/><path d="M64 20 44 45l-8-8z" fill="#ee4d45"/><path d="M16 60 36 37l8 8z" fill="#f2f2f2"/></svg></div>
  <div class="app whats"><svg viewBox="0 0 80 80"><path d="M11 70l4.500-16.500A29 29 0 1 1 27 65z" fill="none" stroke="#fff" stroke-width="5.500" stroke-linejoin="round"/><path d="M30 25c-5 2-7 8-4 14s10 13 17 15 12-1 12-7l-8-5-5 4c-5-2-8-6-10-10l3-4-3-7z" fill="#fff"/></svg></div>
  <div class="app face"><svg viewBox="0 0 80 80"><rect x="12" y="22" width="39" height="36" rx="9" fill="url(#gWhite)"/><path d="M54 36 65 25.500q2.500-1 2.500 2V53q0 3-2.500 2L54 46z" fill="url(#gWhite)"/></svg></div>
  <div class="app mail"><svg viewBox="0 0 80 80"><rect x="12" y="22" width="56" height="36" rx="3" fill="url(#gWhite)"/><path d="m13 24 23 22q4 4 8 0l23-22M13 57l17-17M67 57 50 40" fill="none" stroke="#9aa0a6" stroke-width="1.600"/></svg></div>
  <div class="app photos"><svg viewBox="0 0 80 80"><g opacity=".88"><rect x="30" y="5" width="20" height="33" rx="10" fill="#f39b34"/><rect x="30" y="5" width="20" height="33" rx="10" fill="#ecd73a" transform="rotate(45 40 40)"/><rect x="30" y="5" width="20" height="33" rx="10" fill="#a8cf45" transform="rotate(90 40 40)"/><rect x="30" y="5" width="20" height="33" rx="10" fill="#58b06b" transform="rotate(135 40 40)"/><rect x="30" y="5" width="20" height="33" rx="10" fill="#5e9fd6" transform="rotate(180 40 40)"/><rect x="30" y="5" width="20" height="33" rx="10" fill="#7a6fba" transform="rotate(225 40 40)"/><rect x="30" y="5" width="20" height="33" rx="10" fill="#b972ac" transform="rotate(270 40 40)"/><rect x="30" y="5" width="20" height="33" rx="10" fill="#e5533f" transform="rotate(315 40 40)"/></g></svg></div>
  <div class="app cal"><em>MAR.</em><strong>17</strong></div>
  <div class="app contacts"><svg viewBox="0 0 80 80"><circle cx="42" cy="40" r="25" fill="none" stroke="#7f6038" stroke-width="2"/><circle cx="42" cy="35" r="9" fill="#8a6a3e"/><path d="M24 57q18-18 36 0-18 15-36 0z" fill="#8a6a3e"/><path d="M5 0v80" stroke="#8a683a" stroke-width="1.500"/></svg></div>
  <div class="app remind"><svg viewBox="0 0 80 80"><g stroke="#c2c2c6" stroke-width="2"><path d="M30 20h42M30 40h42M30 60h42"/></g><g stroke-width="1.600"><circle cx="16" cy="20" r="6" fill="#fff" stroke="#3478f6"/><circle cx="16" cy="20" r="3.800" fill="#3478f6"/><circle cx="16" cy="40" r="6" fill="#fff" stroke="#e5483d"/><circle cx="16" cy="40" r="3.800" fill="#e5483d"/><circle cx="16" cy="60" r="6" fill="#fff" stroke="#ef9a36"/><circle cx="16" cy="60" r="3.800" fill="#ef9a36"/></g></svg></div>
  <div class="app notes"><svg viewBox="0 0 80 80"><path d="M0 0h80v20H0z" fill="#f8cf47"/><path d="M0 20.500h80" stroke="#b9a56a" stroke-width="1.500"/><path d="M0 24h80" stroke="#c9c7c2" stroke-width="2" stroke-dasharray="1.500 1.700"/><path d="M0 40h80M0 60h80" stroke="#cfcdc9" stroke-width="1.600"/></svg></div>
  <div class="app music"><svg viewBox="0 0 80 80"><path d="M30 59V22l27-7.500V52" fill="none" stroke="#fff" stroke-width="4"/><path d="M28 18.500 58.500 11.500V25L28 32z" fill="#fff"/><ellipse cx="23" cy="59" rx="8.500" ry="7" fill="#fff"/><ellipse cx="50.500" cy="54" rx="8.500" ry="7" fill="#fff"/></svg></div>
  <div class="app term"><span>&gt;_</span></div>
  <div class="app run discord"><svg viewBox="0 0 80 80"><path d="M30 18q-8 1.300-14 5Q9 38 10.500 55q7 5.500 15 7.500l3-5.500q11 4 23 0l3 5.500q8-2 15-7.500Q71 38 64 23q-6-3.700-14-5l-2 4q-8-1.200-16 0z" fill="#fff"/><ellipse cx="30" cy="42" rx="5.500" ry="6" fill="#626bea"/><ellipse cx="49.500" cy="42" rx="5.500" ry="6" fill="#626bea"/></svg></div>
  <div class="app store"><svg viewBox="0 0 80 80"><path d="M44 18 27 49M36 18l8 13M45 33l17 28M15 49h33M60 49h5M21 58l-2 4" stroke="#fff" stroke-width="6.500" stroke-linecap="round"/></svg></div>
  <div class="app prefs"><svg viewBox="0 0 80 80"><circle cx="40" cy="40" r="34" fill="#2c2e30"/><circle cx="40" cy="40" r="29.500" fill="none" stroke="#9a9c9e" stroke-width="6" stroke-dasharray="2 1.100"/><circle cx="40" cy="40" r="26" fill="none" stroke="#b5b7b9" stroke-width="3"/><circle cx="40" cy="40" r="16" fill="none" stroke="#8d8f91" stroke-width="5"/><path d="M40 40h27M40 40 26.500 17M40 40 26.500 63" stroke="#b5b7b9" stroke-width="3.500"/></svg></div>
  <div class="app run free"><svg viewBox="0 0 80 80"><circle cx="33" cy="48" r="23" fill="url(#gOrange)"/><rect x="27" y="10" width="43" height="43" rx="4" fill="url(#gSky)" opacity=".9"/><path d="M16 52c6-14 9-23 15-23 8 0-3 19 4 19 6 0 6-15 12-15s-2 15 5 15c5 0 9-5 12-12" fill="none" stroke="#193f63" stroke-width="5" stroke-linecap="round"/></svg></div>
  <div class="app run ads"><svg viewBox="0 0 80 80"><path d="M34 38q-8-14 5-17 3-13 13-13t13 13q7 3 7 9 0 8-9 8z" fill="#85cbe8"/><path d="M12 28h35v37q-17 8-35 0z" fill="#3b6fc4"/><ellipse cx="29.500" cy="28" rx="17.500" ry="6" fill="#eee"/><ellipse cx="29.500" cy="28.500" rx="12.500" ry="3.700" fill="#74cfe8"/><path d="M12 49h8l4-6 6 16 6-13 4 4h6" fill="none" stroke="#f2f2f2" stroke-width="2.600"/><circle cx="54" cy="55" r="12" fill="none" stroke="#72bfe2" stroke-width="5" stroke-dasharray="5 4.420"/><circle cx="54" cy="55" r="7.500" fill="#fff" stroke="#72bfe2" stroke-width="6"/></svg></div>
  <div class="app run excel"><svg viewBox="0 0 80 80"><rect x="20" y="13" width="46" height="53" rx="3" fill="#2a6a41"/><path d="M23 13h20v27H20V16q0-3 3-3z" fill="#469b68"/><path d="M43 13h20q3 0 3 3v11H43z" fill="#62bd86"/><path d="M43 27h23v13H43z" fill="#469b68"/><path d="M43 40h23v13H43z" fill="#357a4c"/><rect x="7" y="24" width="30" height="31" rx="3" fill="#2f7b47"/><text x="22" y="47" text-anchor="middle" font-family="Open Sans, sans-serif" font-weight="600" font-size="22" fill="#fff">X</text></svg></div>
  <i class="rule"></i>
  <svg class="doc" width="62" height="81" viewBox="0 0 62 81"><path d="M2 0h37l23 23v56q0 2-2 2H2q-2 0-2-2V2q0-2 2-2z" fill="#f3f3f3"/><path d="m39 0 23 23H42q-3 0-3-3z" fill="#fff" stroke="#c9c9c9"/></svg>
  <svg class="trash" width="72" height="94" viewBox="0 0 72 94"><path d="M2 14h68l-8 74q-2 6-26 6t-26-6z" fill="url(#gTrash)"/><ellipse cx="36" cy="14" rx="34.500" ry="7" fill="#54575a" stroke="#8b8e91" stroke-width="1.500"/><path d="m5 12 7-9 10-2 7 4 5-4 8 6 7-6 8 7 9 4-6 10-10-2-6 4-8-5-7 5-9-4-9 2z" fill="#e6e6e4"/><path d="m12 3 6 10 8-8 5 12 9-11 3 12 6-9 7 8M20 20l4-10M50 20l4-12" fill="none" stroke="#8a8a88" stroke-width="1.500"/><path d="m22 12 8-3 4 6-7 4z" fill="#57bcd0"/><path d="m44 9 8 4-3 6-7-2z" fill="#7a4f48"/><path d="m31 14 5 2-1 6-4-1z" fill="#6fae52"/></svg>
</footer>
</body>
</html>
```
FILE: styles.css
```css
* { box-sizing: border-box; margin: 0; }
html, body { width: 2880px; height: 1800px; overflow: hidden; }
body {
  background:
    linear-gradient(90deg, #000 484px, #2f7de0 486px, #2f7de0 489px, #03060f 493px, #03060f 521px, #6f9de0 525px, #06123f 531px, #061440 700px, #040d1e 1100px, #0a1220 1500px, #141d30 1840px, #000 1848px, #000 2080px, #e8b27a 2084px, #6a9ad0 2093px, #1f4a8a 2180px, #0a1c40 2270px, #020408 2400px, #000 2500px) 0 1786px / 100% 14px no-repeat,
    #030405;
  font-family: "Open Sans", "Noto Sans", sans-serif;
  font-size: 26px;
  line-height: 40px;
  letter-spacing: -.74px;
  color: #252423;
  white-space: nowrap;
}
.defs { position: absolute; }
svg { display: block; flex: none; }
i, em { font-style: normal; }
b { font-weight: 600; }

/* Menu bar */
.menubar {
  display: grid;
  grid-template-columns: 66px 118px 137px 122px 193px 150px 184px 120px 1006px 81px 65px 57px 90px 74px 63px 61px 146px auto;
  align-items: center;
  height: 50px;
  padding: 0 0 4px 40px;
  background: linear-gradient(90deg, #1b2d54, #1a2848 900px, #121e30 1440px, #0b1119 1750px, #050607 2100px, #040404);
  font: 500 26px/40px Inter, sans-serif;
  letter-spacing: -.35px;
  color: #ececec;
}
.menubar b { font-weight: 700; letter-spacing: .5px; }
.menubar .pct { font-size: 22px; letter-spacing: -.3px; }
.menubar .clock { letter-spacing: .2px; }

/* Windows */
.window {
  position: absolute;
  top: 50px;
  width: 1440px;
  height: 1608px;
  display: flex;
  flex-direction: column;
  overflow: hidden;
  border-radius: 20px;
  background: #fff;
}
.inactive { left: 0; --chrome: #282828; --icon: #6c6c6c; --dim: #484848; --line: #363636; --text: #a2a2a2; --bright: #e6e6e6; }
.active { left: 1440px; --chrome: #363636; --icon: #b4b4b4; --dim: #5e5e5e; --line: #4a4a4a; --text: #b9b9b9; --bright: #f0f0f0; box-shadow: 0 0 0 1px #000, 0 40px 68px rgba(0, 0, 0, 1); }
.window::before {
  content: "";
  position: absolute;
  inset: 0;
  z-index: 4;
  border-radius: 20px;
  box-shadow: inset 0 2px 0 -.5px rgba(255, 255, 255, .32), inset 1px 0 0 rgba(255, 255, 255, .18);
}
.nav {
  display: grid;
  grid-template-columns: 155px 52px 13px 66px 71px 71px 82px 90px 539px 77px 131px auto;
  align-items: center;
  height: 104px;
  flex: none;
  padding-left: 40px;
  background: var(--chrome);
  color: var(--icon);
}
.dim { color: var(--dim); }
.bright { color: var(--bright); }
.lights { display: flex; gap: 16px; }
.lights i { width: 24px; height: 24px; border-radius: 50%; background: #4b4b4b; }
.active .lights i:nth-child(1) { background: #ed6a5e; }
.active .lights i:nth-child(2) { background: #f4be4f; }
.active .lights i:nth-child(3) { background: #61c454; }
.sep { width: 2px; height: 36px; background: var(--line); }
.address {
  display: grid;
  grid-template-columns: 29px 228px 53px auto;
  align-items: center;
  width: 490px;
  height: 56px;
  padding-left: 144px;
  border: 2px solid var(--line);
  border-radius: 16px;
  font: 500 26px/40px Inter, sans-serif;
  letter-spacing: -.5px;
  color: #8f8f8f;
}
.active .address { color: #e6e6e6; }
.address span { padding-top: 2px; }
.bookmarks {
  display: grid;
  grid-template-columns: 119px 92px 165px 91px 87px 105px 100px 78px 180px 91px auto;
  align-items: center;
  height: 46px;
  flex: none;
  padding: 0 0 14px 32px;
  background: var(--chrome);
  font: 400 22px/32px Inter, sans-serif;
  letter-spacing: 0;
  color: var(--text);
}
.tabbar {
  display: flex;
  height: 57px;
  flex: none;
  background: #161616;
  box-shadow: inset 0 -2px #000;
  font: 400 22px/57px Inter, sans-serif;
  letter-spacing: -.15px;
}
.btab {
  display: grid;
  grid-template-columns: 42px auto;
  align-items: center;
  justify-content: start;
  width: 360px;
  height: 55px;
  padding-left: 48px;
  border-right: 2px solid #303030;
  border-top: 2px solid #060606;
  color: #5a5a5a;
}
.btab svg { color: #434343; }
.btab:last-child { border-right: 0; }
.btab.current { width: 362px; background: #282828; border-top-color: #282828; color: #6e6e6e; }
.single { align-items: center; padding-left: 508px; background: #363636; gap: 9px; font-weight: 500; letter-spacing: -.03px; color: #fff; }
.fav { width: 32px; height: 32px; border-radius: 6px; background: #8e8e9e; font: 600 22px/33px Inter, sans-serif; text-align: center; color: #fff; }

/* Service header */
.azhead {
  display: grid;
  grid-template-columns: 300px 579px 80px 82px 78px 86px 75px 68px auto;
  align-items: center;
  height: 79px;
  flex: none;
  padding-left: 24px;
  background: #3375cd;
  color: #fff;
}
.brand { font-size: 28px; letter-spacing: -.95px; margin: -3px 0 0 -1px; }
.search {
  display: grid;
  grid-template-columns: 43px auto;
  justify-content: start;
  align-items: center;
  width: 556px;
  height: 52px;
  padding-left: 16px;
  border-radius: 3px;
  background: #b9d4f0;
  color: #20508f;
}
.search span { letter-spacing: -.9px; }
.search svg { color: #3d62d8; }
.mega { position: relative; }
.mega em { position: absolute; left: 17px; top: -23px; width: 32px; height: 32px; border-radius: 50%; background: #fff; color: #2a62ad; font-size: 21px; line-height: 31px; text-align: center; letter-spacing: 0; }
.avatar { width: 56px; height: 56px; margin-top: -7px; border-radius: 50%; background: #dae5ea; color: #2d3d48; font: 500 23px/57px "Open Sans", sans-serif; text-align: center; }

/* Page */
.page { position: relative; display: flex; flex: 1; min-height: 0; background: #fff; }
.page::after { content: ""; position: absolute; left: 0; top: 0; right: 0; height: 56px; background: linear-gradient(rgba(0, 0, 0, .15), rgba(0, 0, 0, .05) 45%, transparent); }
.rail {
  display: flex;
  flex-direction: column;
  width: 97px;
  flex: none;
  border-right: 1px solid #d8d8d8;
  box-shadow: inset -14px 0 12px -10px rgba(0, 0, 0, .22), inset 12px 0 12px -9px rgba(0, 0, 0, .12);
}
.dbl { margin: 19px 0 1px 61px; }
.rail a { display: flex; align-items: center; justify-content: center; height: 96px; margin-bottom: 1px; }
.rail a:nth-of-type(1) { margin-top: 20px; margin-bottom: 0; }
.rail a:nth-of-type(3) { margin-top: 1px; margin-bottom: 0; }
.rail a.on { position: relative; background: #e0e0e0; }
.rail a.on::after { content: ""; position: absolute; left: 24px; top: 96px; width: 48px; height: 2px; background: #ccc; }
.main { display: flex; flex-direction: column; flex: 1; min-width: 0; }
.bar1 {
  display: grid;
  grid-template-columns: 47px 188px 76px 46px 210px 61px 280px 95px 167px 73px auto;
  grid-template-rows: 72px;
  align-items: center;
  height: 74px;
  flex: none;
  padding-left: 47px;
  border-bottom: 2px solid #dcdcdc;
}
.bar1 b { height: 96px; margin: -12px 0; line-height: 48px; letter-spacing: -.85px; align-self: start; }
.bar1 svg, .bar2 svg, .tabacts svg { color: #2f6bbd; }
.bar1 .up { margin-top: -4px; }
.bar1 .grey { color: #605e5c; }
.low { margin-top: 8px; }
.bar1 .top { align-self: start; margin-top: -3px; }
.bar1 .disabled { color: #a6a6a6; }
.toggle { position: relative; width: 80px; height: 40px; border-radius: 20px; background: #6e6e6e; }
.toggle::after { content: ""; position: absolute; left: 12px; top: 8px; width: 24px; height: 24px; border-radius: 50%; background: #fff; box-shadow: 0 2px 5px rgba(0, 0, 0, .5); }
.split { display: flex; flex: 1; min-height: 0; }
.stack { display: flex; flex-direction: column; flex: 1; min-width: 0; }
.fold { width: 47px; flex: none; padding: 24px 0 0 12px; border: 2px solid #cfcfcf; border-width: 2px 2px 2px 1px; }
.fold.second { width: 48px; padding: 23px 0 0 11px; border-left: 0; border-top: 2px solid #cfcfcf; border-bottom: 0; margin-top: -1px; }
.tabs { display: flex; height: 64px; flex: none; font-size: 24px; letter-spacing: -.74px; color: #000; }
.tab { display: grid; grid-template-columns: 46px auto; justify-content: start; align-items: center; width: 363px; height: 64px; flex: none; padding-left: 19px; background: #eaeaea; border-right: 2px solid #fff; }
.tab.open { grid-template-columns: 60px 243px auto; width: 361px; background: #fff; border-right: 2px solid #cfcfcf; }
.tab.cut { width: 81px; padding-left: 18px; overflow: hidden; border-right: 0; }
.tab span, .tab b { padding-top: 1px; }
.tabacts { display: grid; grid-template-columns: 57px auto; justify-content: end; align-items: center; flex: 1; padding-right: 15px; border-bottom: 2px solid #cfcfcf; }
.bar2 {
  display: grid;
  grid-template-columns: 44px 124px 44px 128px 45px 644px 62px 67px auto;
  align-items: center;
  height: 74px;
  flex: none;
  padding-left: 35px;
  border-bottom: 3px solid #cfcfcf;
}

/* Pipeline canvas */
.canvas { position: relative; height: 281px; flex: none; overflow: hidden; border-bottom: 8px solid #fff; }
.canvas.short { height: 277px; }
.graph { position: absolute; left: 0; top: 0; }
.graph.shifted { left: 58px; top: 14px; }
.wires { position: absolute; left: 0; top: 0; }
.node { position: absolute; left: 138px; top: 53px; width: 384px; height: 169px; padding-top: 2px; border: 2px solid #cfcfcf; border-radius: 5px; background: #fff; }
.kind { height: 51px; padding-left: 8px; background: #e5e5e5; border-bottom: 1px solid #eee; font-size: 24px; line-height: 52px; letter-spacing: -.8px; }
.name { display: flex; align-items: center; gap: 18px; padding: 20px 0 0 23px; font-size: 28px; letter-spacing: -.85px; }
.name span { margin-top: -4px; }
.port { border-radius: 2px; background: #fff; box-shadow: 0 0 2px 1.500px #a9c6ee; }
.port.out { position: absolute; left: 524px; top: 113px; }
.foreach { position: absolute; left: 640px; top: -40px; width: 385px; height: 400px; padding: 0 18px; border: 2px solid #3375cd; border-top: 0; background: #fff; }
.fhead { display: flex; gap: 29px; height: 111px; padding: 24px 0 0 10px; font-size: 28px; line-height: 48px; letter-spacing: -.78px; }
.inner { width: 345px; height: 300px; border: 2px solid #3375cd; }
.ihead { display: flex; justify-content: space-between; height: 106px; padding: 30px 17px 0 3px; font-size: 24px; letter-spacing: -.74px; line-height: 42px; }
.ihead svg { margin-top: 16px; color: #3375cd; }
.irow { display: flex; }
.act { width: 143px; padding-left: 48px; font-size: 21px; line-height: 22px; letter-spacing: -.65px; white-space: normal; }
.act svg { margin: 0 0 11px 10px; }
.act span { display: block; width: 60px; }
.arrow { margin-top: 34px; }
.add { display: flex; align-items: center; justify-content: center; width: 42px; height: 42px; margin: 30px 0 0 24px; border-radius: 50%; background: #3375cd; }
.ports { position: absolute; left: 1026px; top: 7px; display: flex; flex-direction: column; gap: 59px; }
.zoom { position: absolute; left: 1168px; top: 20px; width: 60px; display: flex; flex-direction: column; align-items: center; }
.zoom i { position: relative; z-index: 1; display: flex; align-items: center; justify-content: center; width: 60px; height: 60px; margin-bottom: 20px; background: #fff; box-shadow: 0 3px 10px rgba(0, 0, 0, .22); color: #605e5c; }
.zoom i svg { margin-right: 2px; }
.track { width: 8px; height: 104px; margin-top: -20px; background: #605e5c; }
.knob { width: 36px; height: 36px; margin-top: -4px; border: 4px solid #605e5c; border-radius: 50%; background: #fff; }
.splitter { height: 4px; flex: none; padding-left: 608px; background: #e0e0e0; }
.splitter i { display: block; width: 32px; height: 4px; background: #252423; }

/* Properties panel */
.ptabs {
  display: grid;
  grid-template-columns: 113px 143px 100px 142px 176px 488px auto;
  align-items: center;
  height: 80px;
  flex: none;
  padding-left: 41px;
  box-shadow: inset 0 -2px #dedede;
  font-size: 28px;
  letter-spacing: -.77px;
}
.ptabs span { height: 80px; padding-top: 3px; line-height: 82px; justify-self: start; }
.ptabs .sel { font-weight: 600; box-shadow: inset 0 -4px #3375cd; }
.ptabs .sink { margin-left: -1px; }
.form { padding: 32px 0 0 42px; }
.frow { display: grid; align-items: center; justify-content: start; height: 48px; margin-bottom: 30px; }
.frow b { letter-spacing: -.63px; }
.frow b em { color: #c22f2f; }
.dataset { grid-template-columns: 430px auto; }
.dataset b { margin: -4px 0 0 -1px; }
.select { display: grid; grid-template-columns: 42px 424px auto; align-items: center; width: 528px; height: 48px; padding-left: 22px; border: 2px solid #605e5c; border-radius: 4px; }
.select svg:last-child { margin-top: 8px; color: #605e5c; }
.cmds { grid-template-columns: 48px 88px 48px 98px 53px 281px 131px auto; padding-left: 31px; }
.sinkcmds { grid-template-columns: 48px 88px 48px 115px 131px auto; }
.cmds svg, .cmds a { color: #2f6bbd; }
.cmds a { padding-top: 2px; }
.cmds .nv { letter-spacing: -.1px; }
.cmds .ext { margin-top: 10px; }
.sect { grid-template-columns: 37px 431px auto; padding-left: 433px; }
.sect svg { margin-top: 5px; }
.sect b { letter-spacing: -.74px; }
.sect .info { margin-top: -14px; }
.fields { width: 738px; margin: 78px 0 0 430px; display: flex; flex-direction: column; gap: 13px; }
.field { display: flex; flex-direction: column; height: 181px; padding-left: 24px; border-bottom: 2px solid #cdcdcd; }
.input { width: 528px; height: 48px; margin: 19px 0 22px; padding-left: 12px; border: 2px solid #3375cd; border-radius: 4px; background: #f0f5fc; font-weight: 600; line-height: 46px; letter-spacing: -.54px; }
.input.plain { padding-left: 11px; letter-spacing: 0; }
.field label, .field span { height: 40px; margin: -1px 0 1px -1px; }
.tight { padding-top: 28px; }
.tight .cmds { margin-bottom: 28px; }
.tight .fields { margin-top: 79px; }

/* Dock */
.dock {
  position: absolute;
  left: 277px;
  top: 1660px;
  width: 2326px;
  height: 130px;
  display: flex;
  gap: 28px;
  padding: 18px 0 0 17px;
  border: 2px solid rgba(120, 120, 125, .45);
  border-radius: 38px;
  background: linear-gradient(90deg, #171717, #171918 150px, #14223e 225px, #161f4c 320px, #131e33 540px, #111920 850px, #12191e 1100px, #1b1e2c 1500px, #151515 1600px, #171a1f 1690px, #34475f 1815px, #23334f 1890px, #1a2640 1960px, #141a28 2050px, #141519 2130px, #161616);
  background-clip: padding-box;
  box-shadow: 0 0 100px rgba(0, 0, 0, .27);
  letter-spacing: 0;
}
.app { position: relative; width: 80px; height: 80px; flex: none; }
.app::before { content: ""; position: absolute; inset: 0; border-radius: 19px; background: var(--bg, #fff); }
.app svg { position: relative; width: 80px; height: 80px; border-radius: 19px; }
.run::after { content: ""; position: absolute; left: 36px; top: 98px; width: 8px; height: 8px; border-radius: 50%; background: #a2a6ae; }
.launch { --bg: #b3b6ba; }
.safari { --bg: linear-gradient(#fff, #d9d9d9); }
.whats { --bg: linear-gradient(#93ea86, #55c13c); }
.face { --bg: linear-gradient(#87ee7f, #57ba47); }
.mail { --bg: linear-gradient(#3b6cea, #5cc2f8); }
.cal { --bg: linear-gradient(#e8645a 25px, #fbfbfb 25px, #f1efed); text-align: center; }
.cal em, .cal strong { position: relative; display: block; font: 600 16px/26px Inter, sans-serif; color: #fff; }
.cal strong { font: 300 48px/50px Inter, sans-serif; color: #2b2b2b; letter-spacing: -1px; }
.contacts { --bg: linear-gradient(#b18d55, #9a7142); }
.contacts::after { content: ""; position: absolute; right: -4px; top: 10px; width: 5px; height: 60px; border-radius: 0 4px 4px 0; background: linear-gradient(#b9bcc0 25%, #62b9ea 25% 52%, #ee9434 52% 76%, #62cf62 76%); }
.remind { --bg: linear-gradient(#fff, #f1f1f0); }
.notes { --bg: linear-gradient(#f5f4f2, #e0dfdb); }
.music { --bg: linear-gradient(#ee657a, #e63b45); }
.term { --bg: #050505; }
.term::before { border: 3px solid #b5c4c8; border-bottom-color: #7d8080; }
.term::after { content: ""; position: absolute; inset: 8px; border-radius: 12px; background: #232323; }
.term span { position: absolute; z-index: 1; left: 14px; top: 10px; font: 700 19px/24px "Liberation Mono", monospace; color: #fff; }
.discord { --bg: linear-gradient(#7a82f0, #555eea); }
.store { --bg: linear-gradient(#54b4ee, #2456d4); }
.prefs { --bg: linear-gradient(#d5dde2, #8f8d8b); }
.rule { width: 2px; height: 94px; margin: -2px -1px 0 11px; background: #4c4d50; }
.doc { margin: 4px 0 0 17px; }
.trash { margin: -8px 0 0 13px; }
```
